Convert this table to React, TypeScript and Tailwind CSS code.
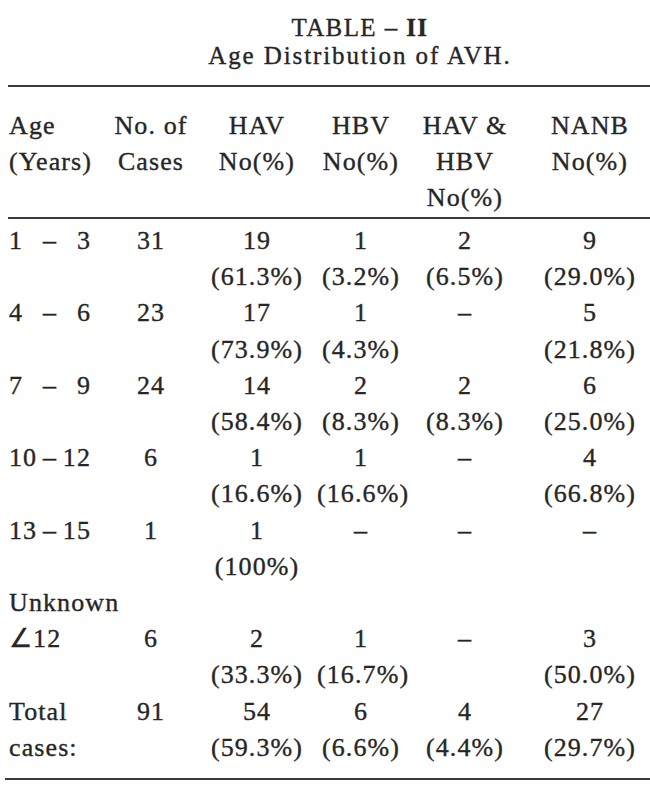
type Cell = string[];

interface Row {
  age: React.ReactNode[];
  cells: Cell[];
}

function Range({ from, to }: { from: string; to: string }) {
  return (
    <span className="flex w-[82px] justify-between">
      <span>{from}</span>
      <span>–</span>
      <span>{to}</span>
    </span>
  );
}

const rows: Row[] = [
  {
    age: [<Range key="a" from="1" to="3" />],
    cells: [['31'], ['19', '(61.3%)'], ['1', '(3.2%)'], ['2', '(6.5%)'], ['9', '(29.0%)']],
  },
  {
    age: [<Range key="a" from="4" to="6" />],
    cells: [['23'], ['17', '(73.9%)'], ['1', '(4.3%)'], ['–'], ['5', '(21.8%)']],
  },
  {
    age: [<Range key="a" from="7" to="9" />],
    cells: [['24'], ['14', '(58.4%)'], ['2', '(8.3%)'], ['2', '(8.3%)'], ['6', '(25.0%)']],
  },
  {
    age: [<Range key="a" from="10" to="12" />],
    cells: [['6'], ['1', '(16.6%)'], ['1', '(16.6%)'], ['–'], ['4', '(66.8%)']],
  },
  {
    age: [<Range key="a" from="13" to="15" />],
    cells: [['1'], ['1', '(100%)'], ['–'], ['–'], ['–']],
  },
  {
    age: ['Unknown'],
    cells: [[], [], [], [], []],
  },
  {
    age: ['∠12'],
    cells: [['6'], ['2', '(33.3%)'], ['1', '(16.7%)'], ['–'], ['3', '(50.0%)']],
  },
  {
    age: ['Total', 'cases:'],
    cells: [['91'], ['54', '(59.3%)'], ['6', '(6.6%)'], ['4', '(4.4%)'], ['27', '(29.7%)']],
  },
];

const headers: Cell[] = [
  ['No. of', 'Cases'],
  ['HAV', 'No(%)'],
  ['HBV', 'No(%)'],
  ['HAV &', 'HBV', 'No(%)'],
  ['NANB', 'No(%)'],
];

const colClass = [
  'text-center',
  'text-center',
  'text-center',
  'text-center',
  'text-center pl-[5px]',
];

function Lines({ lines }: { lines: React.ReactNode[] }) {
  return (
    <>
      {lines.map((l, i) => (
        <div key={i} className="whitespace-nowrap">
          {l}
        </div>
      ))}
    </>
  );
}

export default function App() {
  return (
    <div className="w-[650px] h-[804px] overflow-hidden bg-white text-[#262626] [-webkit-text-stroke:0.35px_#262626] font-['Liberation_Serif','Times_New_Roman',serif]">
      <div className="pt-[14px] pl-[70px] text-center text-[25px] leading-[28px]">
        <div className="tracking-[1.4px]">
          TABLE – <span className="font-bold">II</span>
        </div>
        <div className="tracking-[1.9px]">Age Distribution of AVH.</div>
      </div>

      <div className="mt-[15px] ml-[8px] h-[2px] bg-[#3a3a3a]" />

      <div className="grid grid-cols-[96px_92px_120px_88px_120px_125px] pl-[9px] pt-[21px] text-[26px] leading-[36px] tracking-[1.1px]">
        <div>
          <Lines lines={['Age', '(Years)']} />
        </div>
        {headers.map((h, i) => (
          <div key={i} className={colClass[i]}>
            <Lines lines={h} />
          </div>
        ))}
      </div>

      <div className="mt-[1px] ml-[8px] h-[2px] bg-[#3a3a3a]" />

      <div className="grid grid-cols-[96px_92px_120px_88px_120px_125px] pl-[9px] pt-[4px] pb-[12px] text-[26px] leading-[36.2px] tracking-[1.1px]">
        {rows.map((r, ri) => (
          <div key={ri} className="contents">
            <div>
              <Lines lines={r.age} />
            </div>
            {r.cells.map((c, ci) => (
              <div key={ci} className={colClass[ci]}>
                <Lines lines={c} />
              </div>
            ))}
          </div>
        ))}
      </div>

      <div className="ml-[5px] h-[2px] bg-[#3a3a3a]" />
    </div>
  );
}
